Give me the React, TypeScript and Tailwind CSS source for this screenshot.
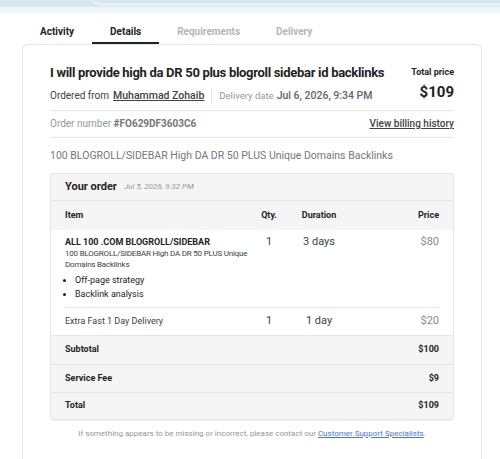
const tabs = [
  { label: 'Activity', state: 'done' },
  { label: 'Details', state: 'active' },
  { label: 'Requirements', state: 'muted' },
  { label: 'Delivery', state: 'muted' },
];

const totals = [
  { label: 'Subtotal', value: '$100', h: 'h-[29px]' },
  { label: 'Service Fee', value: '$9', h: 'h-[28px]' },
  { label: 'Total', value: '$109', h: 'h-[27px]' },
];

const cols = 'grid grid-cols-[184px_40px_60px_1fr] items-center';

export default function App() {
  return (
    <div className="h-[459px] w-[500px] overflow-hidden whitespace-nowrap bg-white font-['Roboto',sans-serif] text-[#404145]">
      {/* top strip */}
      <div className="relative h-[7px] overflow-hidden bg-[#d6e8ed]">
        <div className="absolute left-[90px] top-[-14px] h-[20px] w-[420px] rounded-full border-[3px] border-[#e7f1f4] bg-[#d6e8ed]" />
      </div>
      <div className="h-[6px] bg-[#eef6f7]" />

      <nav className="ml-[22px] mt-[12px] flex text-[10px] font-bold leading-[13px]">
        {tabs.map((t) => (
          <div
            key={t.label}
            className={
              t.state === 'active'
                ? 'border-b-2 border-[#222325] px-[18px] pb-[4px] text-[#222325]'
                : t.state === 'done'
                  ? 'border-b-2 border-transparent px-[18px] pb-[4px] text-[#222325]'
                  : 'border-b-2 border-transparent px-[18px] pb-[4px] text-[#b5b6ba]'
            }
          >
            {t.label}
          </div>
        ))}
      </nav>

      <main className="ml-[22px] mr-[18px] h-[420px] rounded-md rounded-b-none border border-b-0 border-[#e4e5e7] px-[27px] pt-[19px]">
        <div className="flex justify-between">
          <div>
            <h1 className="text-[13px] font-bold leading-[18px] tracking-[-0.3px] text-[#222325]">
              I will provide high da DR 50 plus blogroll sidebar id backlinks
            </h1>
            <div className="mt-[6px] flex items-center text-[10px] leading-[14px]">
              <span className="text-[#404145]">Ordered from</span>
              <span className="ml-[4px] text-[10.5px] font-medium text-[#404145] underline">Muhammad Zohaib</span>
              <span className="mx-[7px] h-[16px] w-px bg-[#e4e5e7]" />
              <span className="text-[9.5px] text-[#95979d]">Delivery date</span>
              <span className="ml-[3px] text-[10.5px] font-medium text-[#62646a]">Jul 6, 2026, 9:34 PM</span>
            </div>
          </div>
          <div className="text-right">
            <div className="pt-[2px] text-[9px] font-bold leading-[12px] text-[#222325]">Total price</div>
            <div className="mt-[5px] text-[15px] font-bold leading-[18px] text-[#222325]">$109</div>
          </div>
        </div>

        <div className="mt-[6px] flex items-center justify-between border-y border-[#e4e5e7] py-[6px] text-[10px] leading-[14px]">
          <div className="text-[#95979d]">
            Order number <span className="font-bold text-[#74767e]">#FO629DF3603C6</span>
          </div>
          <div className="font-medium text-[#404145] underline">View billing history</div>
        </div>

        <p className="mt-[11px] text-[10.5px] leading-[14px] text-[#74767e]">
          100 BLOGROLL/SIDEBAR High DA DR 50 PLUS Unique Domains Backlinks
        </p>

        <section className="mt-[10px] overflow-hidden rounded-[3px] border border-[#e4e5e7] bg-[#f5f5f5] shadow-[0_1px_1px_rgba(0,0,0,0.06)]">
          <div className="flex h-[27px] items-center gap-[7px] border-b border-[#e4e5e7] px-[14px]">
            <span className="text-[11px] font-bold text-[#222325]">Your order</span>
            <span className="text-[8px] italic text-[#95979d]">Jul 5, 2026, 9:32 PM</span>
          </div>

          <div className={`${cols} h-[29px] px-[14px] text-[9px] font-bold text-[#222325]`}>
            <span>Item</span>
            <span className="text-center">Qty.</span>
            <span className="text-center">Duration</span>
            <span className="text-right">Price</span>
          </div>

          <div className="bg-white px-[14px]">
            <div className="grid grid-cols-[184px_40px_60px_1fr] items-start border-b border-[#e4e5e7] pb-[6px] pt-[6px] text-[11px] leading-[12px]">
              <div>
                <div className="text-[9px] font-bold text-[#222325]">ALL 100 .COM BLOGROLL/SIDEBAR</div>
                <div className="text-[8px] leading-[11px] tracking-[-0.2px] text-[#404145]">
                  100 BLOGROLL/SIDEBAR High DA DR 50 PLUS Unique
                  <br />
                  Domains Backlinks
                </div>
                <ul className="mt-[3px] list-disc pl-[10px] text-[9px] leading-[14px] text-[#222325]">
                  <li>Off-page strategy</li>
                  <li>Backlink analysis</li>
                </ul>
              </div>
              <div className="text-center text-[#404145]">1</div>
              <div className="text-center text-[#404145]">3 days</div>
              <div className="text-right text-[#8a8a8a]">$80</div>
            </div>
            <div className={`${cols} h-[27px] text-[9px] text-[#404145]`}>
              <span>Extra Fast 1 Day Delivery</span>
              <span className="text-center text-[11px]">1</span>
              <span className="text-center text-[11px]">1 day</span>
              <span className="text-right text-[11px] text-[#8a8a8a]">$20</span>
            </div>
          </div>

          {totals.map((r) => (
            <div
              key={r.label}
              className={`flex ${r.h} items-center justify-between border-t border-[#e4e5e7] px-[14px] text-[9px] font-bold text-[#222325]`}
            >
              <span>{r.label}</span>
              <span>{r.value}</span>
            </div>
          ))}
        </section>

        <p className="mt-[8px] text-center text-[8px] leading-[12px] text-[#95979d]">
          If something appears to be missing or incorrect, please contact our{' '}
          <span className="text-[#4a73e8] underline">Customer Support Specialists</span>.
        </p>
      </main>
    </div>
  );
}
